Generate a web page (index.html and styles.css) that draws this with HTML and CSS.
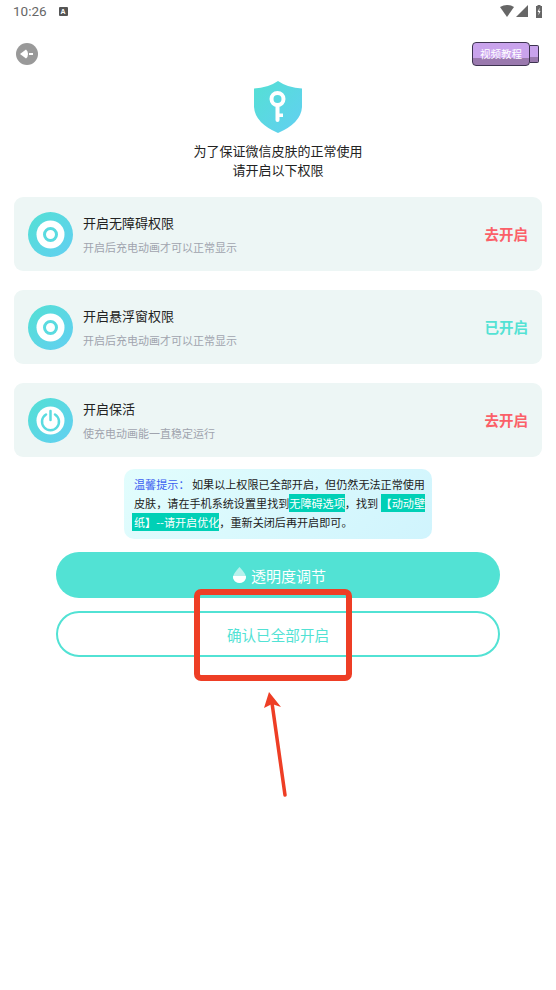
FILE: index.html
```html
<!DOCTYPE html>
<html lang="zh">
<head>
    <meta charset="UTF-8">
    <meta name="viewport" content="width=device-width, initial-scale=1.0">
    <title>开启权限</title>
    <link rel="stylesheet" href="styles.css">
</head>

<body>

<!-- 状态栏 -->
<div class="status-bar">
    <span class="clock">10:26</span>
    <span class="note-icon">A</span>
    <span class="status-right">
        <svg width="14" height="12" viewBox="0 0 14 12"><path d="M0 2Q7-2 14 2L7 12Z" fill="#666"/></svg>
        <svg class="signal" width="12" height="12" viewBox="0 0 12 12"><path d="M12 0V12H0Z" fill="#666"/></svg>
        <svg class="battery" width="6" height="13" viewBox="0 0 6 13"><path d="M1.500 0h3v1H6v12H0V1h1.500Z" fill="#666"/><path d="M3.600 2.500 1.600 7h1.300l-.5 3.500L4.500 6H3.200Z" fill="#fff"/></svg>
    </span>
</div>

<!-- 顶部 -->
<div class="top-bar">
    <svg class="back" width="22" height="22" viewBox="0 0 22 22">
        <circle cx="11" cy="11" r="11" fill="#999"/>
        <path d="M4 11 10 6.500Q12 8 12 11T10 15.500Z" fill="#fff"/>
        <rect x="13" y="10" width="4" height="2" fill="#fff"/>
    </svg>
    <div class="video-btn">
        <span class="video-body">视频教程</span>
        <span class="video-lens"></span>
    </div>
</div>

<div class="head">
    <svg width="48" height="52" viewBox="0 0 48 52">
        <defs>
            <linearGradient id="shield" x1="0" y1="0" x2="1" y2="1">
                <stop offset="0" stop-color="#54e0d4"/>
                <stop offset="1" stop-color="#62cff2"/>
            </linearGradient>
        </defs>
        <path d="M24 0Q34 7 48 7.500V26Q47 42 24 52Q1 42 0 26V7.500Q14 7 24 0Z" fill="url(#shield)"/>
        <circle cx="23.500" cy="18" r="6" fill="none" stroke="#fff" stroke-width="4"/>
        <path d="M23.500 24V39" stroke="#fff" stroke-width="4" stroke-linecap="round"/>
        <path d="M24 32.500h5v3.500h-5Z" fill="#fff"/>
    </svg>
    <p>为了保证微信皮肤的正常使用<br>请开启以下权限</p>
</div>

<!-- 权限列表 -->
<div class="card">
    <svg class="card-icon" viewBox="0 0 45 45">
        <circle cx="22.500" cy="22.500" r="22.500" fill="url(#shield)"/>
        <circle cx="22.500" cy="22.500" r="14" fill="#fff"/>
        <circle cx="22.500" cy="22.500" r="6" fill="none" stroke="#5adbe0" stroke-width="3"/>
    </svg>
    <div class="card-text">
        <div class="card-title">开启无障碍权限</div>
        <div class="card-sub">开启后充电动画才可以正常显示</div>
    </div>
    <span class="state off">去开启</span>
</div>

<div class="card">
    <svg class="card-icon" viewBox="0 0 45 45">
        <circle cx="22.500" cy="22.500" r="22.500" fill="url(#shield)"/>
        <circle cx="22.500" cy="22.500" r="14" fill="#fff"/>
        <circle cx="22.500" cy="22.500" r="6" fill="none" stroke="#5adbe0" stroke-width="3"/>
    </svg>
    <div class="card-text">
        <div class="card-title">开启悬浮窗权限</div>
        <div class="card-sub">开启后充电动画才可以正常显示</div>
    </div>
    <span class="state on">已开启</span>
</div>

<div class="card">
    <svg class="card-icon" viewBox="0 0 45 45">
        <circle cx="22.500" cy="22.500" r="22.500" fill="url(#shield)"/>
        <circle cx="22.500" cy="22.500" r="14" fill="#fff"/>
        <path d="M18 16.500A8.500 8.500 0 1 0 27 16.500" fill="none" stroke="#5adbe0" stroke-width="2.500" stroke-linecap="round"/>
        <path d="M22.500 13V22" stroke="#5adbe0" stroke-width="2.500" stroke-linecap="round"/>
    </svg>
    <div class="card-text">
        <div class="card-title">开启保活</div>
        <div class="card-sub">使充电动画能一直稳定运行</div>
    </div>
    <span class="state off">去开启</span>
</div>

<!-- 提示 -->
<div class="tip">
    <span class="tip-label">温馨提示&#xFF1A;</span> 如果以上权限已全部开启&#xFF0C;但仍然无法正常使用皮肤&#xFF0C;请在手机系统设置里找到<span class="mark">无障碍选项</span>&#xFF0C;找到 <span class="mark">【动动壁</span><span class="mark mark-lead">纸】--请开启优化</span>&#xFF0C;重新关闭后再开启即可&#x3002;
</div>

<!-- 按钮 -->
<div class="btn btn-fill">
    <svg width="13" height="16" viewBox="0 0 13 16">
        <path d="M6.500 0Q13 7 13 10A6.500 6 0 0 1 0 10Q0 7 6.500 0Z" fill="#b8f1ec"/>
        <path d="M0.200 9H12.800Q13 10 13 10A6.500 6 0 0 1 0 10Z" fill="#fff"/>
    </svg>
    透明度调节
</div>
<div class="btn btn-line">确认已全部开启</div>

<!-- 红色标注 -->
<div class="mark-box"></div>
<svg class="mark-arrow" width="40" height="112" viewBox="0 0 40 112">
    <path d="M25 104 12 12" stroke="#ee3e25" stroke-width="3.500" stroke-linecap="round"/>
    <path d="M9 1 21 16 12 13 4 17Z" fill="#ee3e25"/>
</svg>

</body>
</html>
```

FILE: styles.css
```css
/* ===== Halaman ===== */
body {
    margin: 0;
    height: 990px;
    position: relative;
    overflow: hidden;
    background: #fff;
    color: #222;
    font-family: "Noto Sans CJK SC", "Noto Sans", sans-serif;
}

p {
    margin: 0;
}

/* ===== Status bar ===== */
.status-bar {
    height: 22px;
    display: flex;
    align-items: center;
    padding: 0 14px 0 13px;
}

.clock {
    font-family: Roboto, sans-serif;
    font-size: 13.500px;
    color: #666;
}

.note-icon {
    width: 9px;
    height: 9px;
    margin-left: 12px;
    background: #555;
    border-radius: 1px;
    color: #fff;
    font: bold 7px/9px "Liberation Sans", sans-serif;
    text-align: center;
}

.status-right {
    margin-left: auto;
    display: flex;
    align-items: center;
    gap: 2px;
}

.battery {
    margin-left: 6px;
}

/* ===== Top bar ===== */
.top-bar {
    height: 32px;
    margin-top: 16px;
    display: flex;
    align-items: center;
    justify-content: space-between;
    padding: 0 17px 0 16px;
}

.video-btn {
    display: flex;
    align-items: center;
}

.video-body {
    box-sizing: border-box;
    width: 58px;
    height: 24px;
    border: 1px solid #3d3350;
    border-radius: 4px;
    background: linear-gradient(#c9a3ec 0 66%, #9a79ae 66%);
    color: #fff;
    font-size: 10.500px;
    line-height: 21px;
    text-align: center;
}

.video-lens {
    box-sizing: border-box;
    width: 9px;
    height: 18px;
    border: 1px solid #3d3350;
    border-left: 0;
    border-radius: 0 2px 2px 0;
    background: linear-gradient(#c9a3ec 0 66%, #9a79ae 66%);
}

/* ===== Judul ===== */
.head {
    margin-top: 11px;
    text-align: center;
    font-size: 13px;
    line-height: 19px;
}

.head svg {
    display: block;
    margin: 0 auto 8px;
    width: 48px;
    height: 52px;
}

/* ===== Kartu ===== */
.card {
    height: 74px;
    margin: 0 14px 19px;
    padding: 0 14px;
    display: flex;
    align-items: center;
    background: #edf6f5;
    border-radius: 9px;
}

.head + .card {
    margin-top: 18px;
}

.card-icon {
    width: 45px;
    height: 45px;
    flex: none;
}

.card-text {
    flex: 1;
    margin-left: 10px;
}

.card-title {
    font-size: 13px;
    line-height: 20px;
    color: #222;
}

.card-sub {
    margin-top: 6px;
    font-size: 11px;
    line-height: 16px;
    color: #a0a4ae;
}

.state {
    margin-bottom: 2px;
    font-size: 14.500px;
    font-weight: 700;
}

.off {
    color: #fb6068;
}

.on {
    color: #54e2d4;
}

/* ===== Tip ===== */
.tip {
    width: 293px;
    margin: -7px 124px 0;
    padding: 6px 5px 7px 10px;
    background: linear-gradient(135deg, #e2fdfd, #d0f4fd);
    border-radius: 10px;
    font-size: 11.100px;
    line-height: 19px;
    color: #222;
}

.tip-label {
    color: #3a5cf0;
}

.mark {
    background: #00d0b6;
    color: #fff;
    padding: 1px 0;
}

.mark-lead {
    box-shadow: -2px 0 #00d0b6;
}

/* ===== Tombol ===== */
.btn {
    box-sizing: border-box;
    height: 46px;
    margin: 13px 56px 0;
    display: flex;
    align-items: center;
    justify-content: center;
    gap: 5px;
    border-radius: 23px;
    font-size: 14.600px;
}

.btn-fill {
    padding-left: 3px;
    background: #52e2d4;
    color: #fff;
    font-size: 15px;
}

.btn-line {
    border: 2px solid #52e2d4;
    color: #52e2d4;
}

/* ===== Anotasi ===== */
.mark-box {
    position: absolute;
    left: 194px;
    top: 589px;
    width: 146px;
    height: 80px;
    border: 6px solid #ee3e25;
    border-radius: 7px;
}

.mark-arrow {
    position: absolute;
    left: 260px;
    top: 691px;
}
```
